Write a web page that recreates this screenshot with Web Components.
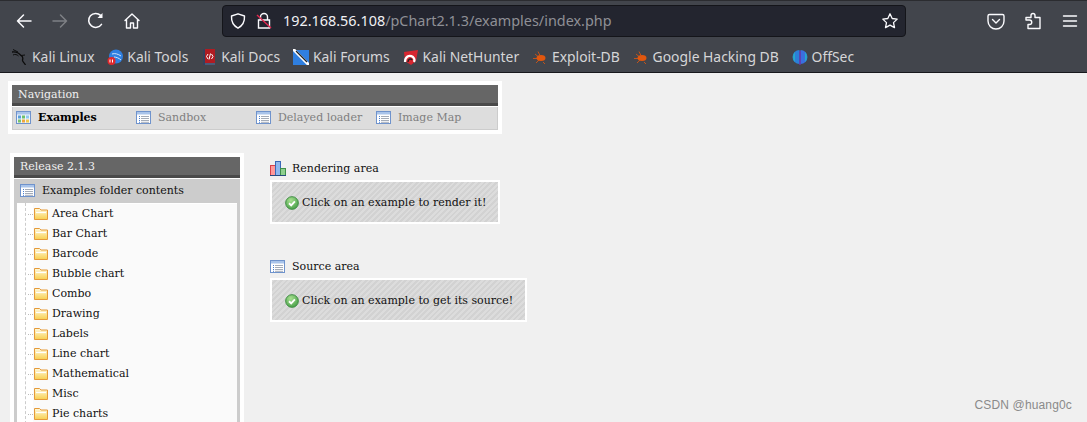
<!DOCTYPE html>
<html><head><meta charset="utf-8">
<style>
html,body{margin:0;padding:0;height:422px;overflow:hidden;background:#f0f0f0}
body{display:flex;flex-direction:column;position:relative}
</style></head><body>
<browser-chrome>
  <tool-btn slot="nav" name="back"></tool-btn>
  <tool-btn slot="nav" name="forward"></tool-btn>
  <tool-btn slot="nav" name="reload"></tool-btn>
  <tool-btn slot="nav" name="home"></tool-btn>
  <tool-btn slot="end" name="pocket"></tool-btn>
  <tool-btn slot="end" name="ext"></tool-btn>
  <tool-btn slot="end" name="menu"></tool-btn>
  <book-mark slot="marks" icon="kali">Kali Linux</book-mark>
  <book-mark slot="marks" icon="tools">Kali Tools</book-mark>
  <book-mark slot="marks" icon="docs">Kali Docs</book-mark>
  <book-mark slot="marks" icon="forums">Kali Forums</book-mark>
  <book-mark slot="marks" icon="hunter">Kali NetHunter</book-mark>
  <book-mark slot="marks" icon="bug">Exploit-DB</book-mark>
  <book-mark slot="marks" icon="bug">Google Hacking DB</book-mark>
  <book-mark slot="marks" icon="offsec">OffSec</book-mark>
</browser-chrome>
<pchart-page>
  <nav-panel slot="top" title="Navigation">
    <nav-tab icon="app" active>Examples</nav-tab>
    <nav-tab icon="list">Sandbox</nav-tab>
    <nav-tab icon="list">Delayed loader</nav-tab>
    <nav-tab icon="list">Image Map</nav-tab>
  </nav-panel>
  <tree-panel slot="side" title="Release 2.1.3" heading="Examples folder contents">
    <tree-item>Area Chart</tree-item>
    <tree-item>Bar Chart</tree-item>
    <tree-item>Barcode</tree-item>
    <tree-item>Bubble chart</tree-item>
    <tree-item>Combo</tree-item>
    <tree-item>Drawing</tree-item>
    <tree-item>Labels</tree-item>
    <tree-item>Line chart</tree-item>
    <tree-item>Mathematical</tree-item>
    <tree-item>Misc</tree-item>
    <tree-item>Pie charts</tree-item>
  </tree-panel>
  <area-block slot="main" icon="chart" title="Rendering area">Click on an example to render it!</area-block>
  <area-block slot="main" icon="list" title="Source area">Click on an example to get its source!</area-block>
</pchart-page>
<water-mark>CSDN @huang0c</water-mark>
<script>
const PAGE_ICONS={
 list:`<rect x=".5" y="1.5" width="14" height="12" fill="#fff" stroke="#6f93cc"/><rect x="1" y="2" width="13" height="2.5" fill="#a9c4ea"/>
  <path d="M3 6.500h1M3 8.500h1M3 10.500h1M3 12.300h1" stroke="#4a7fd0"/><path d="M5 6.500h8M5 8.500h8M5 10.500h8M5 12.300h8" stroke="#a4acb8"/>`,
 app:`<rect x=".5" y="1.5" width="14" height="12" fill="#eef4fc" stroke="#6f93cc"/><rect x="1" y="2" width="13" height="2.5" fill="#a9c4ea"/>
  <rect x="2" y="5.500" width="3" height="3" fill="#5b9fd8"/><rect x="6" y="5.500" width="3" height="3" fill="#6fbf6a"/><rect x="10" y="5.500" width="3" height="3" fill="#8fc8ee"/>
  <rect x="2" y="9.500" width="3" height="3" fill="#7cc36a"/><rect x="6" y="9.500" width="3" height="3" fill="#f0a63c"/><rect x="10" y="9.500" width="3" height="3" fill="#f2c84a"/>`,
 chart:`<rect x=".5" y="4.500" width="5" height="10" fill="#f99" stroke="#d8404a"/><rect x="5.500" y=".5" width="5" height="14" fill="#8fb8ee" stroke="#3a68b8"/><rect x="10.500" y="7.500" width="5" height="7" fill="#8ed08e" stroke="#3f8f4a"/><path d="M0 14.500h16" stroke="#264a80"/>`
};
function def(name,html,init){customElements.define(name,class extends HTMLElement{
  constructor(){super();this.attachShadow({mode:'open'}).innerHTML=typeof html==='function'?html(this):html}
  connectedCallback(){if(typeof html==='function')this.shadowRoot.innerHTML=html(this);init&&init(this)}
})}
const TOOL={
 back:`<path d="M17 10H3.500M9.500 4l-6 6 6 6" fill="none" stroke="#fbfbfe" stroke-width="1.500" stroke-linecap="round" stroke-linejoin="round"/>`,
 forward:`<path d="M3 10h13.500M10.500 4l6 6-6 6" fill="none" stroke="#7e8085" stroke-width="1.500" stroke-linecap="round" stroke-linejoin="round"/>`,
 reload:`<path d="M15.500 13.300A7 7 0 1 1 14.600 4.400" fill="none" stroke="#fbfbfe" stroke-width="1.500" stroke-linecap="round"/><path d="M16.500 2v5h-5z" fill="#fbfbfe"/>`,
 home:`<path d="M3 9.500 10 3l7 6.500M4.500 8.500V17h4v-5h3v5h4V8.500" fill="none" stroke="#fbfbfe" stroke-width="1.400" stroke-linejoin="round" stroke-linecap="round"/>`,
 pocket:`<path d="M3.500 3.500h13A1.500 1.500 0 0 1 18 5v5a8 8 0 0 1-16 0V5a1.500 1.500 0 0 1 1.500-1.500z" fill="none" stroke="#fbfbfe" stroke-width="1.400"/><path d="M6.500 8.500 10 12l3.500-3.500" fill="none" stroke="#fbfbfe" stroke-width="1.400" stroke-linecap="round" stroke-linejoin="round"/>`,
 ext:`<path d="M8 6.500V4.500a2 2 0 0 1 4 0v2h5v11H5v-4h1.500a2 2 0 0 0 0-4.500H3V6.500z" fill="none" stroke="#fbfbfe" stroke-width="1.400" stroke-linejoin="round"/>`,
 menu:`<path d="M3.500 5h13M3.500 10h13M3.500 15h13" stroke="#fbfbfe" stroke-width="1.400" stroke-linecap="round"/>`
};
const MARK={
 kali:`<path d="M0 3C4 2.500 7 4 9 6.500c2 1 2 3 1.500 4.500-.3 1.500 1.500 2.500 3 5" fill="none" stroke="#0c0c0c" stroke-width="1.300"/><path d="M1 .5 6 3M1 6c2-1 4-.5 5.500 1M9 6.500l4-.5" fill="none" stroke="#0c0c0c"/>`,
 tools:`<circle cx="9" cy="7.500" r="7" fill="#2f7fe0"/><path d="M5 5c3-1 6 0 9 2M7 8c2 0 5 1 7 3" stroke="#cfe4fa" fill="none"/><circle cx="4.500" cy="12" r="4" fill="#e0282c"/><path d="M3 10.500v3M5.500 10.500v3" stroke="#fff"/>`,
 docs:`<rect x="2" y="0" width="12" height="15" fill="#b01c22"/><rect x="2" y="14" width="12" height="2" fill="#4a5a78"/><rect x="2" y="0" width="2" height="16" fill="#34425e"/><path d="M7 5 5.500 7.500 7 10M10.500 5 12 7.500 10.500 10M9.500 4.500 8 10.500" stroke="#fff" fill="none"/>`,
 forums:`<rect y="1" width="16" height="15" fill="#2f7fe0"/><path d="M0 0 16 16" stroke="#fff" stroke-width="3"/><path d="M3 2l11 11" stroke="#222" stroke-width="1.200"/>`,
 hunter:`<path d="M1 3 15 1 13 12 8 16 2 12z" fill="#d72630"/><path d="M2 13C2 8 6 5 10 8c1 1 2 3 1 5" fill="none" stroke="#fff" stroke-width="2.200"/><path d="M5 13c0-3 3-4 4-2" fill="none" stroke="#222" stroke-width="1.400"/>`,
 bug:`<ellipse cx="9" cy="9" rx="4.500" ry="3" fill="#e2570e"/><path d="M1 9.500h4M3 5l3 2.500M6 2.500l2 4M4 14l3-3M11 13l2 2" stroke="#e2570e" opacity=".8"/>`,
 offsec:`<path d="M7.500 1A7 7 0 0 0 7.500 15z" fill="#2b7fd8"/><path d="M8.500 1A7 7 0 0 1 8.500 15z" fill="#3a6fe0"/><path d="M1 8a7 7 0 0 1 2-5v10a7 7 0 0 1-2-5zM15 8a7 7 0 0 0-2-5v10a7 7 0 0 0 2-5z" fill="#27a9c8"/><path d="M8 2v14" stroke="#7b2bd0"/>`
};
def('tool-btn',e=>`<style>:host{display:block;width:20px;height:20px}svg{display:block}</style><svg width="20" height="20" viewBox="0 0 20 20">${TOOL[e.getAttribute('name')]||''}</svg>`);
def('book-mark',e=>`<style>:host{display:flex;align-items:center;gap:4px;white-space:nowrap}svg{display:block;flex:none}</style><svg width="16" height="16" viewBox="0 0 16 16">${MARK[e.getAttribute('icon')]||''}</svg><slot></slot>`);
def('browser-chrome',`<style>
:host{display:block;flex:none;height:73px;box-sizing:border-box;background:#42454c;border-top:1px solid #2b2c30;border-bottom:1px solid #17181c;font:13.900px/20px "Noto Sans",sans-serif;color:#d6d6d8}
.row{display:flex;align-items:center;height:38px;padding-top:2px;box-sizing:border-box}
.nav{display:flex;gap:16px;margin-left:14px;width:208px;flex:none}
.url{flex:none;width:684px;height:32px;box-sizing:border-box;background:#23252f;border:1px solid #14151a;border-radius:4px;display:flex;align-items:center;padding:0 6px 0 6px;font-size:14.400px;color:#f0f0f3}
.url svg{flex:none;display:block}
.addr{margin-left:11px;white-space:nowrap}.addr span{color:#8f9096}
.sp{flex:1}
.end{display:flex;margin-left:80px;gap:17px}
.marks{display:flex;gap:12.800px;padding-left:12px;height:30px;margin-top:3px;align-items:center}
</style>
<div class="row"><div class="nav"><slot name="nav"></slot></div>
<div class="url">
<svg width="18" height="18" viewBox="0 0 18 18"><path d="M9 1.800 15.500 4c.3 5.500-1.500 9.500-6.500 12.200C4 13.500 2.200 9.500 2.500 4z" fill="none" stroke="#fbfbfe" stroke-width="1.400" stroke-linejoin="round"/></svg>
<svg style="margin-left:9px" width="16" height="18" viewBox="0 0 16 18"><path d="M4.500 8V5a3.500 3.500 0 0 1 7 0v3M2.500 8h11v8h-11z" fill="none" stroke="#fbfbfe" stroke-width="1.400"/><path d="M1 3l14 13" stroke="#e22850" stroke-width="1.400"/></svg>
<div class="addr">192.168.56.108<span>/pChart2.1.3/examples/index.php</span></div>
<div class="sp"></div>
<svg width="18" height="18" viewBox="0 0 18 18"><path d="m9 1.800 2.200 4.700 5 .6-3.700 3.500 1 5L9 13.100l-4.500 2.500 1-5L1.800 7.100l5-.6z" fill="none" stroke="#fbfbfe" stroke-width="1.300" stroke-linejoin="round"/></svg>
</div>
<div class="end"><slot name="end"></slot></div></div>
<div class="marks"><slot name="marks"></slot></div>`);
def('pchart-page',`<style>
:host{display:block;flex:1;min-height:0;overflow:hidden;padding:8px 0 0 8px;font:11px/14px "DejaVu Serif",serif;color:#111}
.cols{display:flex;margin-top:19px;margin-left:2px;align-items:flex-start}
.main{margin-left:26px;padding-top:8px;display:flex;flex-direction:column;gap:35px}
</style><slot name="top"></slot>
<div class="cols"><slot name="side"></slot><div class="main"><slot name="main"></slot></div></div>`);
def('nav-panel',e=>`<style>
:host{display:block;width:486px;border:4px solid #fff;background:#fff}
.h{height:18px;background:#666;border-bottom:3px solid #4a4a4a;color:#f0f0f0;padding-left:6px;line-height:19px;margin-bottom:1px}
.tabs{display:flex;height:23px;box-sizing:border-box;background:#ddd;border:1px solid #ccc;border-top:0;align-items:center;padding-left:3px}
</style><div class="h">${e.getAttribute('title')}</div><div class="tabs"><slot></slot></div>`);
def('nav-tab',e=>`<style>
:host{display:flex;align-items:center;width:120px;gap:6px;color:#808080;white-space:nowrap}
:host([active]){color:#000;font-weight:bold}
svg{display:block;flex:none}
</style><svg width="16" height="16" viewBox="0 0 16 16">${PAGE_ICONS[e.getAttribute('icon')]}</svg><slot></slot>`);
def('tree-panel',e=>`<style>
:host{display:block;width:226px;flex:none;border:4px solid #fff;border-bottom:0;background:#fff}
.h{height:18px;background:#666;border-bottom:3px solid #4a4a4a;color:#f0f0f0;padding-left:6px;line-height:19px;margin-bottom:1px}
.b{background:#ccc;padding:0 3px}
.t{height:24px;margin:0 -2px;padding-left:5px;display:flex;align-items:center;gap:6px;color:#111}
.t svg{display:block;flex:none}
.l{background:#fff;padding-top:1px;position:relative}
.l::before{content:"";position:absolute;left:8px;top:0;bottom:0;border-left:1px dashed #ccc}
</style><div class="h">${e.getAttribute('title')}</div>
<div class="b"><div class="t"><svg width="16" height="16" viewBox="0 0 16 16">${PAGE_ICONS.list}</svg>${e.getAttribute('heading')}</div>
<div class="l"><slot></slot></div></div>`);
def('tree-item',`<style>
:host{display:flex;align-items:center;height:20px;padding-left:11px;color:#111;white-space:nowrap;background:linear-gradient(90deg,#fff 16px,#fafafa 16px)}
i{display:block;width:5px;border-top:1px dotted #bbb}
svg{display:block;flex:none;margin:0 4px 0 1px}
</style><i></i><svg width="14" height="12" viewBox="0 0 14 12"><defs><linearGradient id="g" x1="0" y1="0" x2="0" y2="1"><stop offset="0" stop-color="#fff8dc"/><stop offset="1" stop-color="#f8d050"/></linearGradient></defs>
<path d="M.5.500h5L7 2h6.500v9.500H.5z" fill="url(#g)" stroke="#e59a3a"/><path d="M2 4.500h10" stroke="#fff" stroke-width="1.200"/></svg><slot></slot>`);
def('area-block',e=>`<style>
:host{display:block;width:fit-content}
.t{display:flex;align-items:center;gap:6px;height:16px;margin-bottom:3px}
svg{display:block;flex:none}
.box{border:2px solid #fff;box-sizing:border-box;height:44px;padding:2px 12px 0 13px;display:flex;align-items:center;gap:3px;white-space:nowrap;
background:repeating-linear-gradient(135deg,#dcdcdc 0 2px,#d2d2d2 2px 4px)}
</style><div class="t"><svg width="16" height="16" viewBox="0 0 16 16">${PAGE_ICONS[e.getAttribute('icon')]}</svg>${e.getAttribute('title')}</div>
<div class="box"><svg width="14" height="14" viewBox="0 0 15 15"><defs><radialGradient id="c" cx=".4" cy=".3" r=".8"><stop offset="0" stop-color="#a8e090"/><stop offset="1" stop-color="#3f9a42"/></radialGradient></defs><circle cx="7.500" cy="7.500" r="6.800" fill="url(#c)" stroke="#3a8a3e"/><path d="M4.300 7.800 6.600 10l4-4.300" fill="none" stroke="#fff" stroke-width="2"/></svg><slot></slot></div>`);
def('water-mark',`<style>:host{position:absolute;right:15px;top:398px;font:12px/14px "Liberation Sans",sans-serif;letter-spacing:.15px;color:#8a8a8a;white-space:nowrap}</style><slot></slot>`);
</script>
</body></html>
